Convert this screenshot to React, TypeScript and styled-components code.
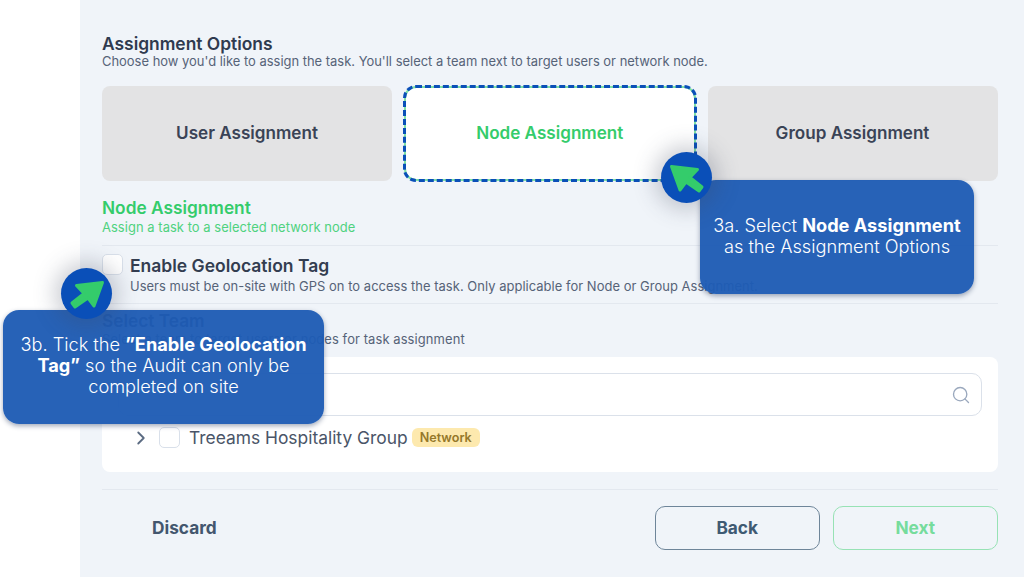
import styled, { createGlobalStyle } from "styled-components";
import { ChevronRight, Search } from "lucide-react";

const Global = createGlobalStyle`
  * { box-sizing: border-box; }
  html, body { margin: 0; height: 100%; background: #fff; overflow: hidden; }
  body { font-family: Inter, "Noto Sans", "Liberation Sans", sans-serif; }
`;

function Arrow({ flip }: { flip?: boolean }) {
  return (
    <svg width="40" height="40" viewBox="-20 -20 40 40" style={{ transform: flip ? "scaleX(-1)" : undefined }}>
      <path
        d="M-15.5 -11.5 L10.5 -8.5 L3 -0.5 L15 9 L12 13 L-1 4 L-7 12 Z"
        fill="#34cc6b"
        stroke="#34cc6b"
        strokeWidth="3"
        strokeLinejoin="round"
      />
    </svg>
  );
}

export default function App() {
  return (
    <Page>
      <Global />
      <Sidebar />
      <Main>
        <Title>Assignment Options</Title>
        <Sub>Choose how you'd like to assign the task. You'll select a team next to target users or network node.</Sub>
        <Cards>
          <Card>User Assignment</Card>
          <Card $active>Node Assignment</Card>
          <Card>Group Assignment</Card>
        </Cards>
        <GreenTitle>Node Assignment</GreenTitle>
        <GreenSub>Assign a task to a selected network node</GreenSub>
        <Divider />
        <GeoRow>
          <CheckBox />
          <div>
            <GeoLabel>Enable Geolocation Tag</GeoLabel>
            <Sub $track={0.04}>Users must be on-site with GPS on to access the task. Only applicable for Node or Group Assignment.</Sub>
          </div>
        </GeoRow>
        <Divider />
        <TeamTitle>Select Team</TeamTitle>
        <Sub $track={0.1}>Select a team to target users or nodes for task assignment</Sub>
        <Panel>
          <SearchBox>
            <Search size={20} color="#9aa8bd" strokeWidth={1.6} />
          </SearchBox>
          <TreeRow>
            <ChevronRight size={22} color="#5b6b82" strokeWidth={2} />
            <TreeCheck />
            <TreeLabel>Treeams Hospitality Group</TreeLabel>
            <Tag>Network</Tag>
          </TreeRow>
        </Panel>
        <FooterLine />
        <Footer>
          <Discard>Discard</Discard>
          <Buttons>
            <Outline>Back</Outline>
            <Outline $green>Next</Outline>
          </Buttons>
        </Footer>
      </Main>

      <Callout $left={3} $top={310} $width={321}>
        <Badge $left={58} $top={-42}>
          <Arrow flip />
        </Badge>
        <span>
          3b. Tick the <b>”Enable Geolocation Tag”</b> so the Audit can only be completed on site
        </span>
      </Callout>
      <Callout $left={700} $top={180} $width={274}>
        <Badge $left={-39} $top={-28}>
          <Arrow />
        </Badge>
        <span>
          3a. Select <b>Node Assignment</b> as the Assignment Options
        </span>
      </Callout>
    </Page>
  );
}

const Page = styled.div`
  position: relative;
  display: flex;
  width: 1024px;
  height: 577px;
  overflow: hidden;
  color: #2f3a4f;
`;

const Sidebar = styled.div`
  width: 80px;
  flex: none;
  background: #fff;
`;

const Main = styled.main`
  flex: 1;
  background: #f0f4f9;
  padding: 34px 26px 0 22px;
`;

const Title = styled.h2`
  margin: 0;
  font-size: 17.4px;
  line-height: 19px;
  font-weight: 600;
  color: #2f3a4f;
`;

const Sub = styled.p<{ $track?: number }>`
  margin: 0;
  font-size: 12.95px;
  line-height: 17px;
  letter-spacing: ${(p) => p.$track ?? 0}px;
  color: #566378;
  white-space: nowrap;
`;

const Cards = styled.div`
  display: grid;
  grid-template-columns: 290px 291.5px 290px;
  gap: 12px;
  margin-top: 16px;
`;

const Card = styled.div<{ $active?: boolean }>`
  position: relative;
  height: 95px;
  display: flex;
  align-items: center;
  justify-content: center;
  padding-bottom: 2px;
  font-size: 17.1px;
  font-weight: 600;
  background: ${(p) => (p.$active ? "#fff" : "#e3e3e4")};
  color: ${(p) => (p.$active ? "#34cc6b" : "#3a4356")};
  border-radius: ${(p) => (p.$active ? "12px" : "8px")};
  ${(p) =>
    p.$active &&
    `
    border: 2px solid #7fe0a4;
    &::after {
      content: "";
      position: absolute;
      inset: -3px;
      border: 3px dashed #0a4fb8;
      border-radius: 13px;
    }
  `}
`;

const GreenTitle = styled.h3`
  margin: 17px 0 0;
  font-size: 17.3px;
  line-height: 20px;
  font-weight: 600;
  color: #34cc6b;
`;

const GreenSub = styled.p`
  margin: 1px 0 0;
  font-size: 12.95px;
  line-height: 17px;
  letter-spacing: 0.05px;
  color: #4fd27f;
`;

const Divider = styled.hr`
  margin: 9px 0 0;
  border: 0;
  border-top: 1px solid #e3e8ef;
`;

const GeoRow = styled.div`
  display: flex;
  gap: 7px;
  padding-top: 8px;
  margin-bottom: -1px;
`;

const CheckBox = styled.span`
  display: block;
  flex: none;
  width: 21px;
  height: 21px;
  background: #fff;
  border: 1.5px solid #d9e0ea;
  border-radius: 5px;
`;

const TreeCheck = styled(CheckBox)`
  margin-left: 7px;
`;

const GeoLabel = styled.div`
  font-size: 17.5px;
  line-height: 24px;
  font-weight: 600;
  color: #333d50;
`;

const TeamTitle = styled.h3`
  margin: 7px 0 0;
  font-size: 17.3px;
  line-height: 20px;
  font-weight: 600;
  color: #2f3a4f;
`;

const Panel = styled.section`
  margin-top: 9px;
  height: 115px;
  padding: 16px;
  background: #fff;
  border-radius: 8px;
`;

const SearchBox = styled.div`
  height: 43px;
  display: flex;
  align-items: center;
  justify-content: flex-end;
  padding-right: 10px;
  border: 1.5px solid #dbe1ea;
  border-radius: 10px;
`;

const TreeRow = styled.div`
  display: flex;
  align-items: center;
  margin: 10px 0 0 12px;
  height: 23px;
`;

const TreeLabel = styled.span`
  margin-left: 9px;
  font-size: 17.4px;
  color: #4a5568;
`;

const Tag = styled.span`
  margin-left: 4px;
  padding: 2px 8px;
  background: #fde9ae;
  border-radius: 6px;
  font-size: 12.6px;
  font-weight: 600;
  line-height: 15px;
  color: #95782a;
`;

const FooterLine = styled(Divider)`
  margin-top: 17px;
`;

const Footer = styled.footer`
  display: flex;
  align-items: center;
  justify-content: space-between;
  margin-top: 16px;
  padding-left: 50px;
`;

const Discard = styled.span`
  font-size: 17.3px;
  font-weight: 700;
  margin-top: -2px;
  color: #43566e;
`;

const Buttons = styled.div`
  display: flex;
  gap: 12.5px;
`;

const Outline = styled.button<{ $green?: boolean }>`
  width: 165.5px;
  height: 44px;
  padding-bottom: 3px;
  background: transparent;
  border: 1.5px solid ${(p) => (p.$green ? "#97e2b5" : "#6e8599")};
  border-radius: 10px;
  font-family: inherit;
  font-size: 17.3px;
  font-weight: 700;
  color: ${(p) => (p.$green ? "#76dc9d" : "#3f5a73")};
`;

const Callout = styled.div<{ $left: number; $top: number; $width: number }>`
  position: absolute;
  left: ${(p) => p.$left}px;
  top: ${(p) => p.$top}px;
  width: ${(p) => p.$width}px;
  height: 114px;
  display: flex;
  align-items: center;
  justify-content: center;
  padding: 0 10px 3px;
  background: rgba(30, 92, 180, 0.96);
  border-radius: 16px;
  box-shadow: 0 2px 5px rgba(20, 40, 80, 0.4);
  color: #fff;
  text-align: center;
  font-size: 18.2px;
  line-height: 21px;
  font-weight: 300;

  b {
    font-weight: 700;
  }
`;

const Badge = styled.div<{ $left: number; $top: number }>`
  position: absolute;
  left: ${(p) => p.$left}px;
  top: ${(p) => p.$top}px;
  width: 51px;
  height: 51px;
  display: flex;
  align-items: center;
  justify-content: center;
  border-radius: 50%;
  background: #0a4fb8;
  box-shadow: 0 0 22px 6px rgba(60, 70, 90, 0.28);
`;
